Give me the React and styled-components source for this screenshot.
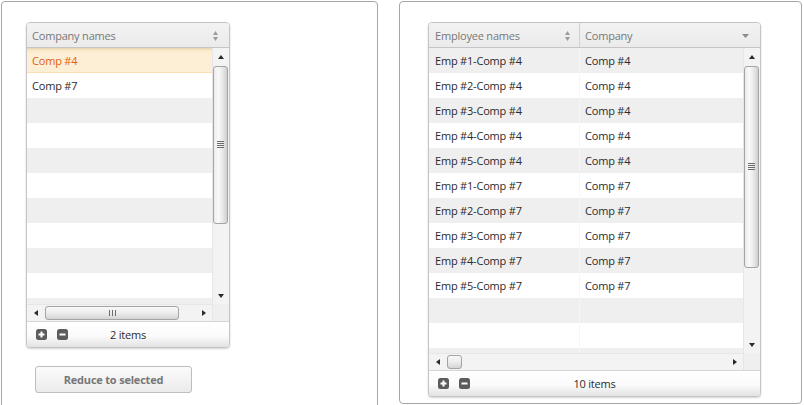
import React from 'react';
import styled, { createGlobalStyle, css } from 'styled-components';

const Global = createGlobalStyle`
  html, body { margin: 0; padding: 0; background: #fff; overflow: hidden; }
  body {
    font-family: "Open Sans", "Noto Sans", sans-serif;
    font-size: 11px;
    letter-spacing: -0.2px;
    color: #2b2b2b;
  }
  * { box-sizing: border-box; }
`;

const Page = styled.div`
  display: flex;
  align-items: flex-start;
  gap: 21px;
  padding: 1px 0 0 1px;
  height: 405px;
  overflow: hidden;
`;

const Panel = styled.div`
  width: ${(p) => p.$w}px;
  height: ${(p) => p.$h}px;
  border: 1px solid #a6a6a6;
  border-radius: 4px;
  padding: 20px 0 0 ${(p) => p.$pl}px;
  display: flex;
  flex-direction: column;
  align-items: flex-start;
  flex-shrink: 0;
`;

const Grid = styled.div`
  width: ${(p) => p.$w}px;
  border: 1px solid #c5c5c5;
  border-radius: 4px;
  overflow: hidden;
  display: flex;
  flex-direction: column;
  box-shadow: 0 1px 2px rgba(0, 0, 0, 0.18);
  background: #fff;
`;

const Header = styled.div`
  display: flex;
  height: 25px;
  border-bottom: 1px solid #c5c5c5;
  background: linear-gradient(#f2f2f2, #ebebeb);
`;

const HeaderCell = styled.div`
  ${(p) => (p.$w ? css`width: ${p.$w}px; flex-shrink: 0;` : css`flex: 1;`)}
  display: flex;
  align-items: center;
  justify-content: space-between;
  padding: 1px ${(p) => p.$pr}px 0 ${(p) => p.$pl}px;
  color: #787878;
  ${(p) => p.$divider && css`border-left: 1px solid #d0d0d0;`}
`;

const Body = styled.div`
  display: flex;
`;

const ViewportCol = styled.div`
  flex: 1;
  display: flex;
  flex-direction: column;
  min-width: 0;
`;

const Rows = styled.div`
  height: ${(p) => p.$h}px;
  overflow: hidden;
`;

const Row = styled.div`
  display: flex;
  height: 25px;
  background: ${(p) => (p.$alt ? '#efefef' : '#fff')};
  ${(p) =>
    p.$selected &&
    css`
      background: linear-gradient(#e6d3b0 0px, #f7e6c6 2px, #fdefd5 5px, #fdefd5 100%);
      color: #e2620f;
      border-bottom: 1px solid #fbdfae;
    `}
`;

const Cell = styled.div`
  ${(p) => (p.$w ? css`width: ${p.$w}px; flex-shrink: 0;` : css`flex: 1;`)}
  display: flex;
  align-items: center;
  padding: 0 0 0 ${(p) => p.$pl}px;
  white-space: nowrap;
  ${(p) => p.$divider && css`border-left: 1px solid #f6f6f6;`}
`;

const VScrollCol = styled.div`
  width: 17px;
  display: flex;
  flex-direction: column;
  flex-shrink: 0;
`;

const VScroll = styled.div`
  height: ${(p) => p.$h}px;
  display: flex;
  flex-direction: column;
  background: #f3f3f3;
  border-left: 1px solid #e6e6e6;
`;

const ArrowBtn = styled.div`
  width: ${(p) => (p.$horizontal ? '17px' : '100%')};
  height: ${(p) => (p.$horizontal ? '100%' : '17px')};
  display: flex;
  align-items: center;
  justify-content: center;
  flex-shrink: 0;
`;

const VTrack = styled.div`
  flex: 1;
  padding: 1px 1px 0 0;
`;

const VThumb = styled.div`
  height: ${(p) => p.$h}px;
  border: 1px solid #a4a4a4;
  border-radius: 3px;
  background: linear-gradient(to right, #ececec 0%, #f9f9f9 35%, #e6e6e6 70%, #cfcfcf 100%);
  display: flex;
  align-items: center;
  justify-content: center;
`;

const Corner = styled.div`
  height: 17px;
  background: #efefef;
  border-left: 1px solid #e6e6e6;
`;

const HScroll = styled.div`
  height: 17px;
  display: flex;
  background: #f3f3f3;
  border-top: 1px solid #e6e6e6;
`;

const HTrack = styled.div`
  flex: 1;
  padding: 1px 0 1px ${(p) => p.$offset}px;
`;

const HThumb = styled.div`
  width: ${(p) => p.$w}px;
  height: 100%;
  border: 1px solid #a4a4a4;
  border-radius: 3px;
  background: linear-gradient(#f8f8f8 0%, #ececec 50%, #d4d4d4 100%);
  display: flex;
  align-items: center;
  justify-content: center;
`;

const Footer = styled.div`
  height: 26px;
  border-top: 1px solid #d6d6d6;
  background: linear-gradient(#ffffff 0%, #fbfbfb 55%, #e2e2e2 100%);
  display: grid;
  grid-template-columns: 1fr auto 1fr;
  align-items: center;
  padding: 0 ${(p) => p.$px}px;
`;

const FooterTools = styled.div`
  display: flex;
  gap: 10px;
  align-items: center;
`;

const FooterText = styled.div`
  color: #2b2b2b;
`;

const ActionButton = styled.button`
  margin: 18px 0 0 9px;
  width: 157px;
  height: 27px;
  border: 1px solid #bdbdbd;
  border-radius: 3px;
  background: linear-gradient(#fbfbfb, #ebebeb);
  color: #777;
  font-family: "Open Sans", "Noto Sans", sans-serif;
  font-weight: 700;
  font-size: 11px;
  letter-spacing: -0.2px;
  padding: 0;
`;

const SortIcon = () => (
  <svg width="5" height="10" viewBox="0 0 5 10">
    <polygon points="2.5,0 5,4 0,4" fill="#9c9c9c" />
    <polygon points="0,6 5,6 2.5,10" fill="#9c9c9c" />
  </svg>
);

const MenuIcon = () => (
  <svg width="7" height="4" viewBox="0 0 7 4">
    <polygon points="0,0 7,0 3.5,4" fill="#8c8c8c" />
  </svg>
);

const Arrow = ({ dir }) => {
  const pts = {
    up: '0,4 3,0 6,4',
    down: '0,0 6,0 3,4',
    left: '4,0 4,6 0,3',
    right: '0,0 4,3 0,6',
  }[dir];
  const vertical = dir === 'up' || dir === 'down';
  return (
    <svg width={vertical ? 6 : 4} height={vertical ? 4 : 6} viewBox={vertical ? '0 0 6 4' : '0 0 4 6'}>
      <polygon points={pts} fill="#2a2a2a" />
    </svg>
  );
};

const Grip = ({ horizontal }) =>
  horizontal ? (
    <svg width="7" height="6" viewBox="0 0 7 6">
      <rect x="0" y="0" width="1" height="6" fill="#6c6c6c" />
      <rect x="3" y="0" width="1" height="6" fill="#6c6c6c" />
      <rect x="6" y="0" width="1" height="6" fill="#6c6c6c" />
    </svg>
  ) : (
    <svg width="7" height="8" viewBox="0 0 7 8">
      <rect x="0" y="0" width="7" height="1" fill="#6c6c6c" />
      <rect x="0" y="2" width="7" height="1" fill="#6c6c6c" />
      <rect x="0" y="4" width="7" height="1" fill="#6c6c6c" />
      <rect x="0" y="6" width="7" height="1" fill="#6c6c6c" />
    </svg>
  );

const ToolIcon = ({ plus }) => (
  <svg width="11" height="11" viewBox="0 0 11 11">
    <rect x="0" y="0" width="11" height="11" rx="2.5" fill="#5c5c5c" />
    <rect x="2.5" y="4.5" width="6" height="2" fill="#fff" />
    {plus && <rect x="4.5" y="2.5" width="2" height="6" fill="#fff" />}
  </svg>
);

const VerticalScrollbar = ({ height, thumb }) => (
  <VScrollCol>
    <VScroll $h={height}>
      <ArrowBtn>
        <Arrow dir="up" />
      </ArrowBtn>
      <VTrack>
        <VThumb $h={thumb}>
          <Grip />
        </VThumb>
      </VTrack>
      <ArrowBtn>
        <Arrow dir="down" />
      </ArrowBtn>
    </VScroll>
    <Corner />
  </VScrollCol>
);

const HorizontalScrollbar = ({ thumb, grip }) => (
  <HScroll>
    <ArrowBtn $horizontal>
      <Arrow dir="left" />
    </ArrowBtn>
    <HTrack $offset={1}>
      <HThumb $w={thumb}>{grip && <Grip horizontal />}</HThumb>
    </HTrack>
    <ArrowBtn $horizontal>
      <Arrow dir="right" />
    </ArrowBtn>
  </HScroll>
);

const GridFooter = ({ count, px }) => (
  <Footer $px={px}>
    <FooterTools>
      <ToolIcon plus />
      <ToolIcon />
    </FooterTools>
    <FooterText>{count} items</FooterText>
    <span />
  </Footer>
);

const companies = ['Comp #4', 'Comp #7'];
const employees = ['Comp #4', 'Comp #7'].flatMap((c) =>
  [1, 2, 3, 4, 5].map((n) => ({ name: `Emp #${n}-${c}`, company: c }))
);

export default function App() {
  const leftRows = Array.from({ length: 11 }, (_, i) => companies[i] || '');
  const rightRows = Array.from({ length: 13 }, (_, i) => employees[i] || null);

  return (
    <>
      <Global />
      <Page>
        <Panel $w={377} $h={430} $pl={24}>
          <Grid $w={204}>
            <Header>
              <HeaderCell $pl={5} $pr={11}>
                <span>Company names</span>
                <SortIcon />
              </HeaderCell>
            </Header>
            <Body>
              <ViewportCol>
                <Rows $h={256}>
                  {leftRows.map((c, i) => (
                    <Row key={i} $alt={i % 2 === 0} $selected={i === 0}>
                      <Cell $pl={5}>{c}</Cell>
                    </Row>
                  ))}
                </Rows>
                <HorizontalScrollbar thumb={134} grip />
              </ViewportCol>
              <VerticalScrollbar height={256} thumb={158} />
            </Body>
            <GridFooter count={2} px={9} />
          </Grid>
          <ActionButton>Reduce to selected</ActionButton>
        </Panel>

        <Panel $w={403} $h={403} $pl={28}>
          <Grid $w={333}>
            <Header>
              <HeaderCell $w={150} $pl={6} $pr={9}>
                <span>Employee names</span>
                <SortIcon />
              </HeaderCell>
              <HeaderCell $divider $pl={5} $pr={11}>
                <span>Company</span>
                <MenuIcon />
              </HeaderCell>
            </Header>
            <Body>
              <ViewportCol>
                <Rows $h={305}>
                  {rightRows.map((e, i) => (
                    <Row key={i} $alt={i % 2 === 0}>
                      <Cell $w={150} $pl={6}>
                        {e ? e.name : ''}
                      </Cell>
                      <Cell $divider $pl={5}>
                        {e ? e.company : ''}
                      </Cell>
                    </Row>
                  ))}
                </Rows>
                <HorizontalScrollbar thumb={15} />
              </ViewportCol>
              <VerticalScrollbar height={305} thumb={202} />
            </Body>
            <GridFooter count={10} px={9} />
          </Grid>
        </Panel>
      </Page>
    </>
  );
}
